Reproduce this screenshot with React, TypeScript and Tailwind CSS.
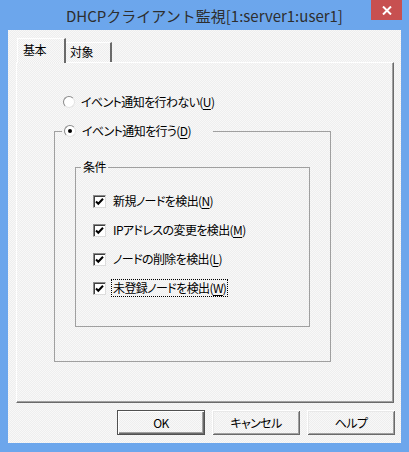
import React from "react";

const dither =
  "bg-[#f0f0f0] bg-[repeating-conic-gradient(#eeeeee_0_25%,#f8f8f8_0_50%)] bg-[length:2px_2px]";

function Check() {
  return (
    <span className="w-[13px] h-[13px] shrink-0 bg-white border border-t-[#8a8a8a] border-l-[#8a8a8a] border-r-[#dcdcdc] border-b-[#dcdcdc] shadow-[inset_1px_1px_0_#404040] flex items-center justify-center">
      <svg width="9" height="9" viewBox="0 0 9 9">
        <path d="M1 4.5 L3.3 6.8 L8 1.8" stroke="#000" strokeWidth="2" fill="none" />
      </svg>
    </span>
  );
}

function Radio({ on }: { on?: boolean }) {
  return (
    <span className="w-[12px] h-[12px] shrink-0 rounded-full bg-white border border-t-[#8a8a8a] border-l-[#8a8a8a] border-r-[#e4e4e4] border-b-[#e4e4e4] flex items-center justify-center">
      {on && <span className="w-[4px] h-[4px] rounded-full bg-black" />}
    </span>
  );
}

function Btn({ children, def }: { children: React.ReactNode; def?: boolean }) {
  return (
    <div
      className={
        "w-[88px] h-[25px] flex items-center justify-center text-[12px] " +
        (def
          ? "border border-[#505050] shadow-[inset_1px_1px_0_#fff,inset_-1px_-1px_0_#6a6a6a,inset_-2px_-2px_0_#a0a0a0] "
          : "shadow-[inset_1px_1px_0_#fff,inset_-1px_-1px_0_#6a6a6a,inset_2px_2px_0_#e8e8e8,inset_-2px_-2px_0_#a0a0a0] ") +
        dither
      }
    >
      {children}
    </div>
  );
}

function CheckRow({ label, k, focus }: { label: string; k: string; focus?: boolean }) {
  return (
    <div className="h-[18px] flex items-center gap-[5px]">
      <Check />
      <span
        className={
          "leading-[16px] px-[1px] " + (focus ? "border border-dotted border-black" : "border border-transparent")
        }
      >
        {label}(<span className="underline underline-offset-2">{k}</span>)
      </span>
    </div>
  );
}

export default function App() {
  return (
    <div className="w-[409px] h-[452px] bg-[#6ca6ec] flex flex-col font-['Noto_Sans_CJK_JP',sans-serif] text-[12px] text-black [font-feature-settings:'palt'] tracking-[-0.6px] overflow-hidden">
      <div className="h-[30px] relative flex items-center justify-center">
        <span className="text-[15px] text-[#2e2e2e] leading-none tracking-normal [font-feature-settings:normal]">
          DHCPクライアント監視[1:server1:user1]
        </span>
        <div className="absolute right-[7px] top-0 w-[31px] h-[20px] bg-[#c75050] flex items-center justify-center">
          <svg width="10" height="9" viewBox="0 0 10 9">
            <path d="M1 0.5 L9 8.5 M9 0.5 L1 8.5" stroke="#fff" strokeWidth="2" />
          </svg>
        </div>
      </div>

      <div className={"ml-[8px] w-[393px] h-[413px] flex flex-col " + dither}>
        <div className="h-[32px] pt-[8px] pl-[9px] flex items-end relative z-10">
          <div className={"w-[49px] h-[25px] -mb-[1px] border-t border-l border-white border-r-2 border-r-[#6a6a6a] flex items-start pt-[2px] pl-[5px] " + dither}>
            基本
          </div>
          <div className={"w-[46px] h-[20px] border-t border-white border-r-2 border-r-[#6a6a6a] flex items-start pl-[4px] " + dither}>
            対象
          </div>
        </div>

        <div className="ml-[8px] w-[378px] h-[341px] border-t border-l border-white border-r border-b border-r-[#6a6a6a] border-b-[#6a6a6a] shadow-[inset_-1px_-1px_0_#a0a0a0] flex flex-col">
          <div className="mt-[31px] ml-[46px] h-[16px] flex items-center gap-[6px]">
            <Radio />
            <span>
              イベント通知を行わない(<span className="underline underline-offset-2">U</span>)
            </span>
          </div>

          <fieldset className="mt-[13px] ml-[37px] w-[277px] h-[239px] border border-[#a0a0a0]">
            <legend className="ml-[7px] w-[151px] h-[16px] pl-[2px] flex items-center gap-[6px]">
              <Radio on />
              <span>
                イベント通知を行う(<span className="underline underline-offset-2">D</span>)
              </span>
            </legend>

            <fieldset className="mt-[20px] ml-[20px] w-[235px] h-[168px] border border-[#a0a0a0]">
              <legend className="ml-[5px] px-[2px] h-[16px] leading-[16px]">条件</legend>
              <div className="mt-[17px] pl-[17px] flex flex-col gap-[11px]">
                <CheckRow label="新規ノードを検出" k="N" />
                <CheckRow label="IPアドレスの変更を検出" k="M" />
                <CheckRow label="ノードの削除を検出" k="L" />
                <CheckRow label="未登録ノードを検出" k="W" focus />
              </div>
            </fieldset>
          </fieldset>
        </div>

        <div className="mt-[7px] flex justify-end gap-[7px] pr-[6px]">
          <Btn def>OK</Btn>
          <Btn>キャンセル</Btn>
          <Btn>ヘルプ</Btn>
        </div>
      </div>
    </div>
  );
}
